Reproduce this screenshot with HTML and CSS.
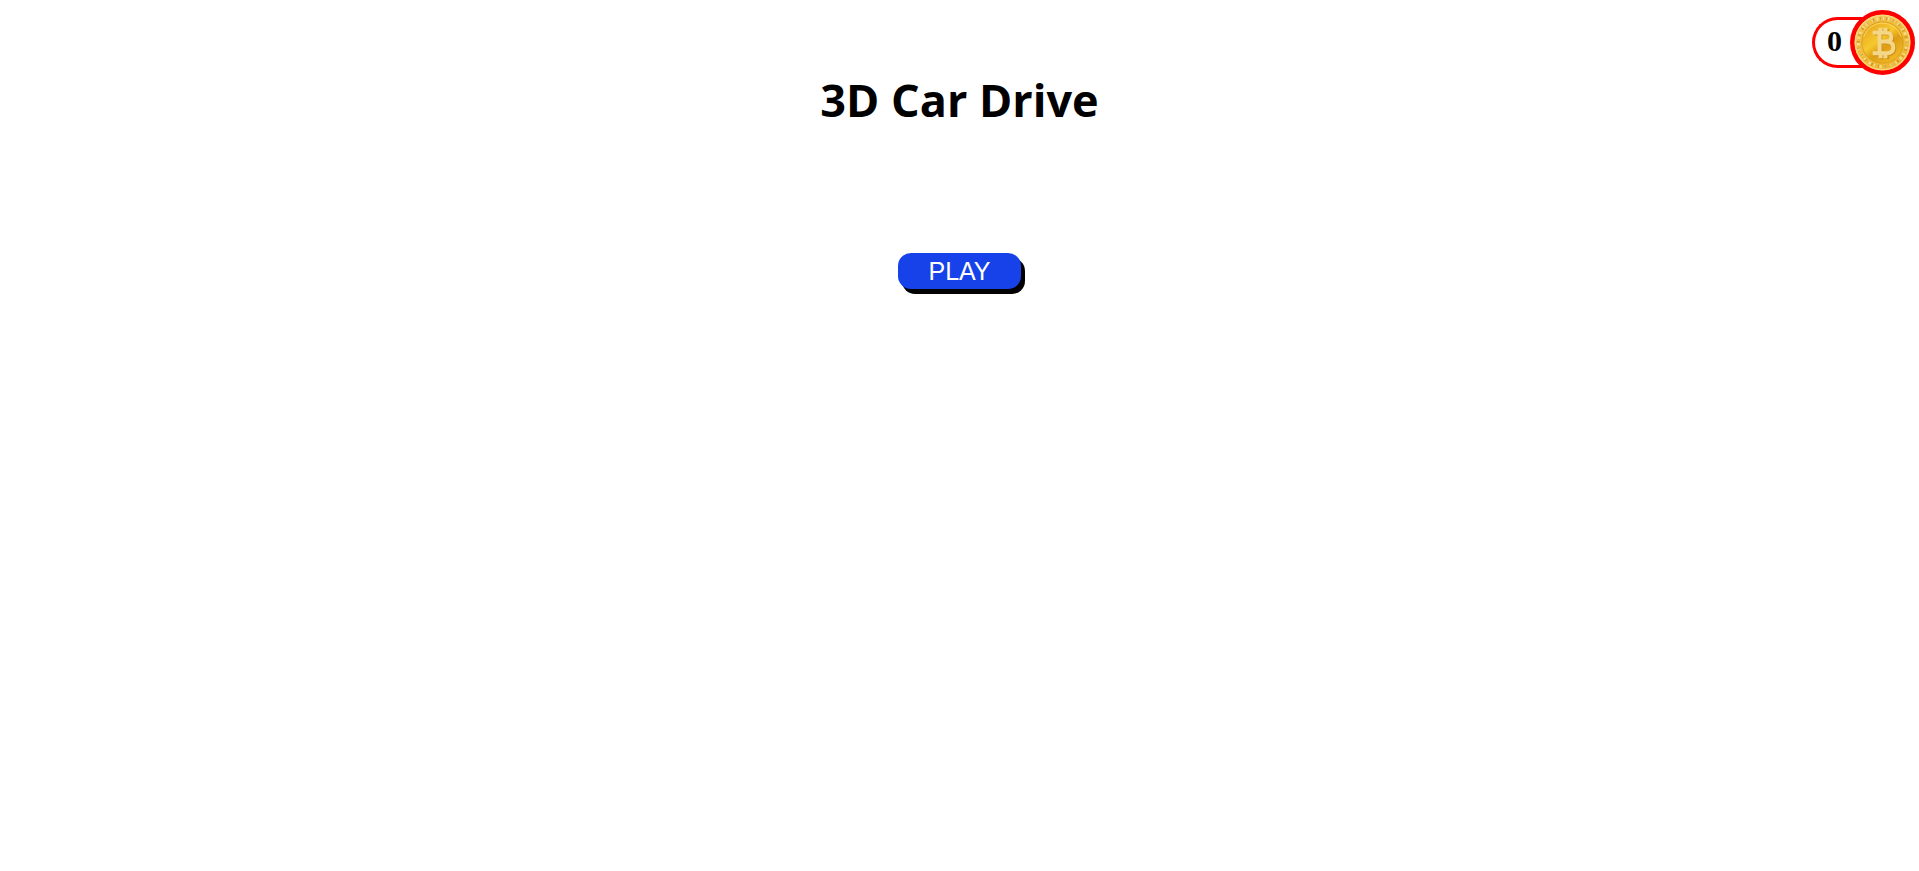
FILE: index.html
```html
<!DOCTYPE html>
<html lang="en">
<head>
<meta charset="utf-8">
<meta name="viewport" content="width=device-width, initial-scale=1">
<title>3D Car Drive</title>
<link rel="stylesheet" href="styles.css">
</head>
<body>
<div class="wallet">
  <span class="wallet-count">0</span>
  <svg class="coin" viewBox="0 0 66 66" role="img" aria-label="Coins">
    <defs>
      <linearGradient id="gold" x1="0.1" y1="0" x2="0.8" y2="1">
        <stop offset="0" stop-color="#f0c04c"/>
        <stop offset="0.5" stop-color="#f0bd3a"/>
        <stop offset="1" stop-color="#eeb42c"/>
      </linearGradient>
      <linearGradient id="face" x1="0.1" y1="0.1" x2="0.8" y2="1">
        <stop offset="0" stop-color="#e9a722"/>
        <stop offset="0.4" stop-color="#f6c92e"/>
        <stop offset="0.6" stop-color="#dd9c14"/>
        <stop offset="1" stop-color="#f3c02a"/>
      </linearGradient>
    </defs>
    <circle cx="33" cy="33" r="33" fill="#f00"/>
    <circle cx="33" cy="33" r="28.5" fill="url(#gold)"/>
    <circle cx="33" cy="33" r="27.5" fill="none" stroke="#f8dd8c" stroke-width="1.5" opacity=".8"/>
    <circle cx="33" cy="33" r="24.500" fill="none" stroke="#fae9b4" stroke-width="3" stroke-dasharray="1.500 3 2.500 4.500" opacity=".7"/>
    <circle cx="33" cy="33" r="24.500" fill="none" stroke="#b07f28" stroke-width="3" stroke-dasharray="1 5.500 1.500 6" opacity=".6"/>
    <circle cx="33" cy="33" r="21" fill="url(#face)" stroke="#d8981c" stroke-width="0.800"/>
    <path d="M14 27A20 20 0 0 1 52 27" fill="none" stroke="#f9d75c" stroke-width="1"/>
    <g fill="none" stroke-linejoin="round">
      <path d="M24 23h12q6 0 6 4.500t-6 4.500h-5m5 0q8 0 8 6t-8 6H24M30 23v21M31 18v5M37 18v5M31 44v5M37 44v5" stroke="#c88a16" stroke-width="4" transform="translate(1 1)" opacity=".75"/>
      <path d="M23 23h13q6 0 6 4.500t-6 4.500h-5m5 0q8 0 8 6t-8 6H23M30 23v21M31 18v5M36 18v5M31 44v5M36 44v5" stroke="#f3d687" stroke-width="4"/>
    </g>
  </svg>
</div>
<main class="menu">
  <h1 class="title">3D Car Drive</h1>
  <button class="play" type="button">PLAY</button>
</main>
</body>
</html>
```
FILE: styles.css
```css
body {
  min-height: 100vh;
  margin: 0;
  background: #fff;
  color: #000;
  font-family: "Liberation Serif", "Times New Roman", serif;
}

.wallet {
  position: absolute;
  top: 17px;
  right: 4px;
  display: flex;
  align-items: center;
  box-sizing: border-box;
  height: 51px;
  padding-left: 12px;
  border: 3px solid #f00;
  border-right: 0;
  border-radius: 26px;
}

.wallet-count {
  padding-bottom: 4px;
  font-size: 30px;
  font-weight: bold;
}

.coin {
  width: 65px;
  height: 65px;
  margin: -8px 0 -8px 8px;
}

.menu {
  display: flex;
  flex-direction: column;
  align-items: center;
  gap: 120px;
  padding: 66px 0 16px;
}

.title {
  margin: 0;
  font-family: "Comic Sans MS", "Open Sans", sans-serif;
  font-size: 45px;
  line-height: 67px;
}

.play {
  padding: 0 30px;
  border: 0;
  border-radius: 13px;
  background: #1742ea;
  box-shadow: 4px 5px #000;
  color: #fff;
  font-family: "Liberation Sans", Arial, sans-serif;
  font-size: 25px;
  line-height: 36px;
  cursor: pointer;
}
```
